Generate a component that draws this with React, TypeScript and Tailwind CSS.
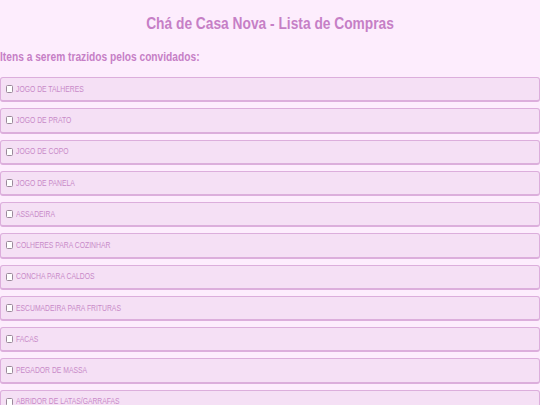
const ITEMS = [
  "JOGO DE TALHERES",
  "JOGO DE PRATO",
  "JOGO DE COPO",
  "JOGO DE PANELA",
  "ASSADEIRA",
  "COLHERES PARA COZINHAR",
  "CONCHA PARA CALDOS",
  "ESCUMADEIRA PARA FRITURAS",
  "FACAS",
  "PEGADOR DE MASSA",
  "ABRIDOR DE LATAS/GARRAFAS",
  "RALADOR",
  "PANO DE PRATO",
];

// The page uses a narrow Arial; Liberation Sans squeezed horizontally stands in for it.
export default function App() {
  return (
    <div className="min-h-screen bg-[#fdedfd] font-['Liberation_Sans',Arial,sans-serif] text-[#c67fc6]">
      <h1 className="pt-[14px] text-center text-[16px] font-bold leading-[20px]">
        <span className="inline-block origin-center scale-x-[0.86]">Chá de Casa Nova - Lista de Compras</span>
      </h1>
      <h2 className="mt-[15px] text-[12px] font-bold leading-[16px]">
        <span className="inline-block origin-left scale-x-[0.85]">Itens a serem trazidos pelos convidados:</span>
      </h2>
      <ul className="mt-[12px] flex flex-col gap-[6px]">
        {ITEMS.map((item) => (
          <li
            key={item}
            className="flex h-[25.25px] items-center rounded-[3px] border border-b-2 border-[#dcaedc] bg-[#f5e0f5] pl-[5px]"
          >
            <span className="h-[8px] w-[7px] shrink-0 rounded-[1.5px] border border-[#9a8a9a] bg-white" />
            <span className="ml-[3px] inline-block origin-left scale-x-[0.8] whitespace-nowrap text-[8.5px] leading-none text-[#c88ac8]">
              {item}
            </span>
          </li>
        ))}
      </ul>
    </div>
  );
}
